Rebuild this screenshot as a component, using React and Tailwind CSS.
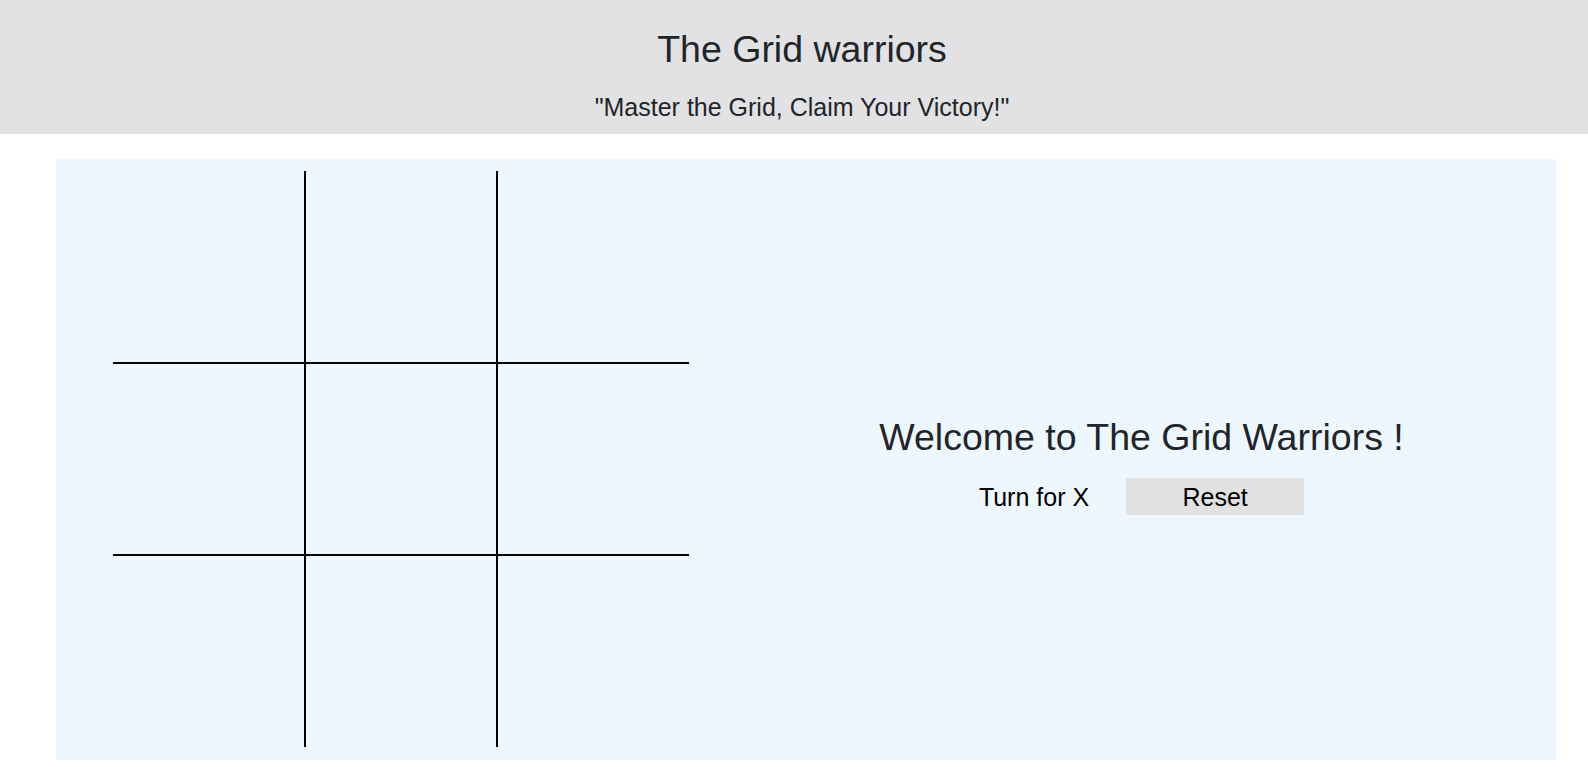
import { useState } from 'react'

const cellBorders = [
  '', 'border-x-2', '',
  'border-y-2', 'border-2', 'border-y-2',
  '', 'border-x-2', '',
]

export default function App() {
  const [cells, setCells] = useState(Array(9).fill(null))
  const [turn, setTurn]   = useState('X')

  const jugar = i => {
    if (cells[i]) return
    const next = [...cells]
    next[i] = turn
    setCells(next)
    setTurn(turn === 'X' ? 'O' : 'X')
  }

  const reset = () => { setCells(Array(9).fill(null)); setTurn('X') }

  return (
    <div className="min-h-screen bg-white text-[#212529] font-['Liberation_Sans',Arial,sans-serif]">
      <header className="bg-[#e2e2e4] pt-[27px] pb-[12px] pl-[16px] text-center">
        <h1 className="text-[37.5px] leading-[45px]">The Grid warriors</h1>
        <p className="mt-[20px] text-[25px] leading-[30px]">"Master the Grid, Claim Your Victory!"</p>
      </header>

      <main className="mt-[25px] ml-[56px] w-[1500px] h-[601px] bg-[#eef6fe] flex">
        {/* Tablero */}
        <div className="mt-[12px] ml-[57px] mr-[38px] grid grid-cols-[191px_194px_191px] grid-rows-[191px_194px_191px] w-[576px] h-[576px]">
          {cells.map((c, i) => (
            <div key={i} onClick={() => jugar(i)}
              className={`border-black flex items-center justify-center text-[80px] cursor-pointer ${cellBorders[i]}`}>
              {c}
            </div>
          ))}
        </div>

        <div className="flex-1 flex flex-col items-center justify-center pt-[11px]">
          <h2 className="text-[37.5px] leading-[45px]">Welcome to The Grid Warriors !</h2>
          <div className="mt-[18px] flex items-center gap-[37px] text-black">
            <span className="text-[25px] leading-[30px]">Turn for {turn}</span>
            <button onClick={reset}
              className="w-[178px] h-[37px] bg-[#e1e1e1] text-[25px] leading-[30px]">
              Reset
            </button>
          </div>
        </div>
      </main>
    </div>
  )
}
